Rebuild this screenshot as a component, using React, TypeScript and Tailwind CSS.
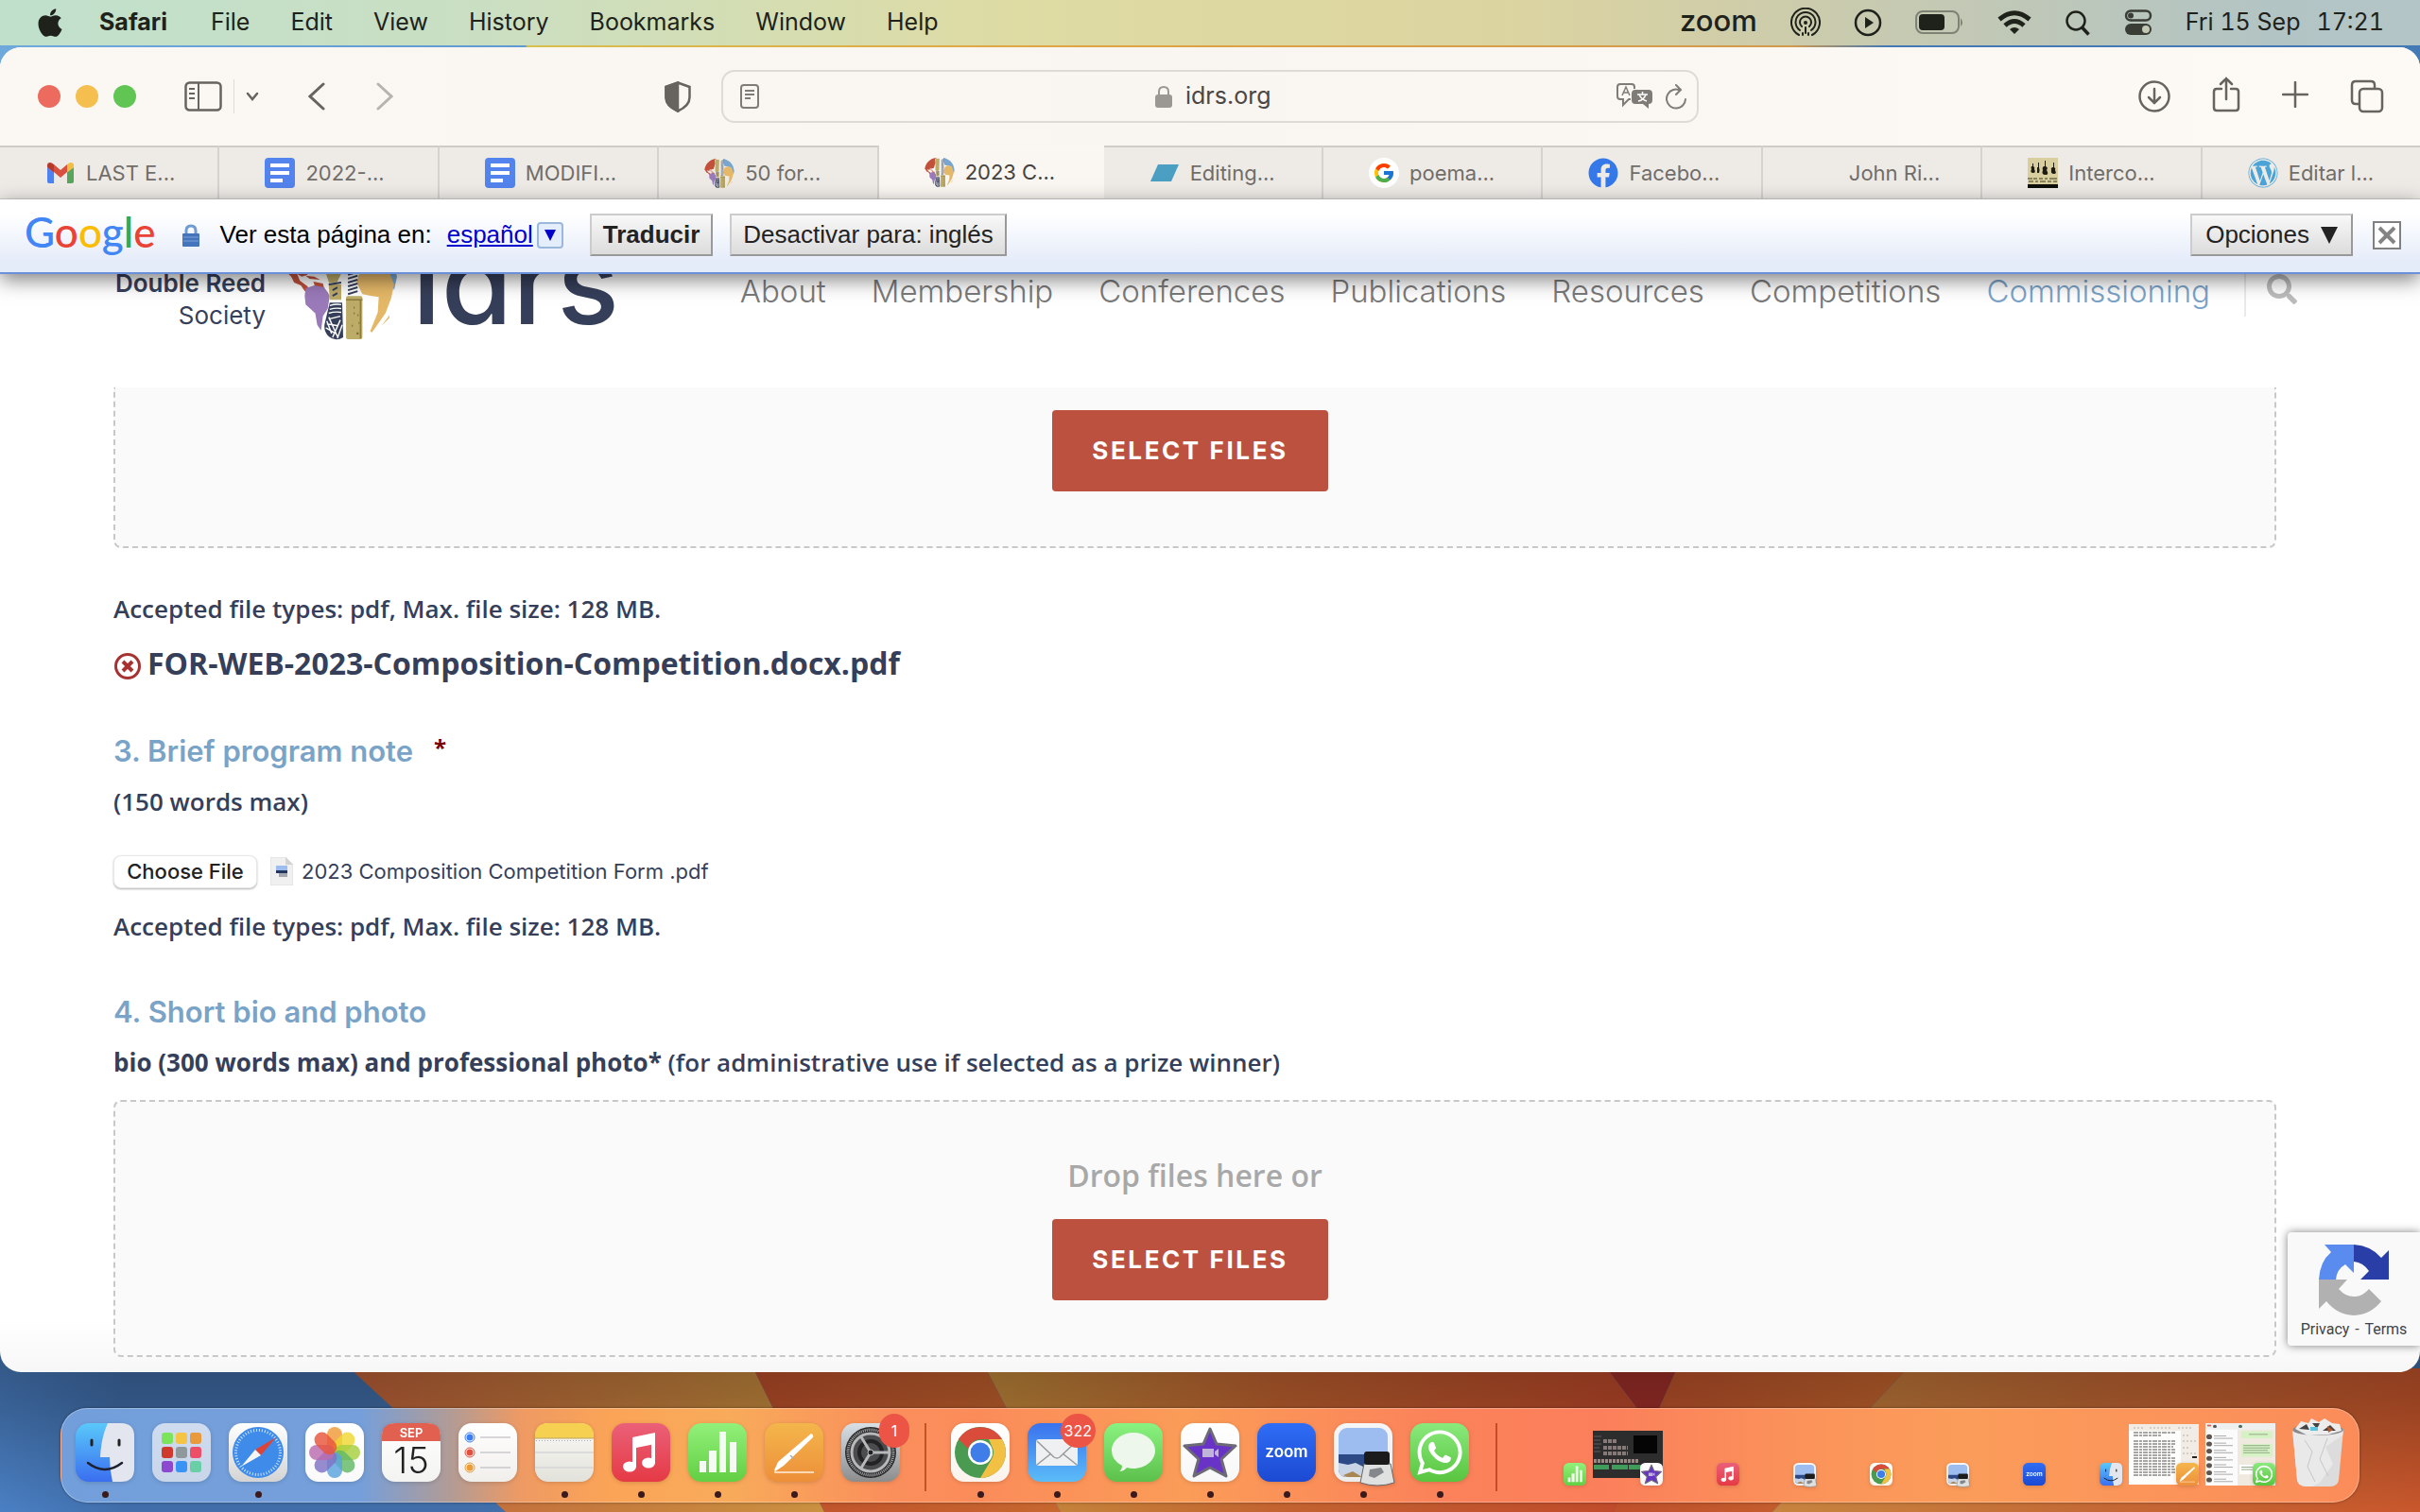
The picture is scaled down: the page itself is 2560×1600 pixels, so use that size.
import React from 'react';
import { FaApple, FaFacebook, FaWordpress, FaSearch, FaWhatsapp } from 'react-icons/fa';
import { FcGoogle } from 'react-icons/fc';

type IconProps = { className?: string };

/* ---------- logos shared by tabs and page header ---------- */

const IdrsGlobe = ({ className }: IconProps) => (
  <svg viewBox="0 0 116 116" className={className} aria-hidden="true">
    <path d="M1 46C4 24 20 8 44 3l4 16-8 10-4 14-10 2-6-1 2 4-6 2-5-3 3 7 8 6 2 6-5-1-4-6-7-3-3-6z" fill="#c2513b" />
    <path d="M28 55l10 2 1 4 1 0-1 1-9-1zM20 49l9 1 6 3-11-1z" fill="#c2513b" />
    <path d="M20 62l9-3 10 2 4 5 2 4-2 13-5 8-2 15-4-6-2-12-10-9-1-9z" fill="#9a7ab9" />
    <path d="M72 4c16 2 33 14 39 30l4 16-3 14-4-10-4-16-10-4-16-2-6-14z" fill="#7aa6cd" />
    <path d="M78 38l14-5 12 5 8 20-3 14-6 16-14 20-2-1 8-20 1-16-7-1-10-2-6-12z" fill="#e5b868" />
    <path d="M107 90l-8 11 8-8zM40 6l6 1v8l-5 3z" fill="#e5b868" />
    <path d="M42 6h16l-1 42-4 8-9 1-3-9z" fill="#bdab68" stroke="#fff" />
    <path d="M44 58h13v16H45z" fill="#bdab68" />
    <path d="M64 6h9v60h-9z" fill="#fff" />
    <path d="M64 12l10-3M64 16l10-3M64 20l10-3M64 24l10-3M64 28l10-3M64 32l10-3M64 36l10-3M64 40l10-3M64 44l10-3M64 48l10-3M64 52l10-3M64 56l10-3M64 60l10-3M64 64l10-3M64 68l10-3M44 58l13-2M48 70l5-3M48 64l5-3" stroke="#363f5a" strokeWidth="2" />
    <path d="M45 77h13l1 36q-8 5-15-1-6-6-4-14z" fill="#363f5a" />
    <path d="M45 80q6-2 12-1M45 84q6-2 12-1M44 88q6-2 13-1M44 94l12-3M42 99l12 2M41 103l10 6M44 92l9 20M56 95l-8 18M58 100l-5 14M42 96l5 13" stroke="#fff" strokeWidth="1.4" fill="none" />
    <rect x="62" y="70" width="17" height="45" rx="2" fill="#bdab68" />
    <path d="M62 74h17M77 74v40" stroke="#8c7b3c" strokeWidth="1.5" />
    <path d="M70 82h1M74 90h1M68 101h1M73 109h2M75 98h1M70 88h1" stroke="#7a6b35" strokeWidth="2" />
  </svg>
);

const Gmail = () => (
  <svg viewBox="0 0 32 32" className="size-8" aria-hidden="true">
    <path d="M2 10v15q0 2 2 2h5V15z" fill="#4f82ef" />
    <path d="M30 10v15q0 2-2 2h-5V15z" fill="#58a65c" />
    <path d="M9 7l7 6 7-6v8l-7 6-7-6z" fill="#d9503f" />
    <path d="M2 10V8q0-3 3-3 1.500 0 4 2v8.500L2 10z" fill="#b63a2c" />
    <path d="M30 10V8q0-3-3-3-1.500 0-4 2v8.500L30 10z" fill="#f1bd42" />
  </svg>
);

const Docs = () => (
  <svg viewBox="0 0 32 32" className="size-8" aria-hidden="true">
    <rect width="32" height="32" rx="4" fill="#5383ec" />
    <path d="M6 6h20v4H6zM6 14h20v4H6zM6 22h13v4H6z" fill="#fff" />
  </svg>
);

const Editing = () => (
  <svg viewBox="0 0 32 32" className="size-8" aria-hidden="true">
    <path d="M9 7h22l-8 18H1z" fill="#4b9fc2" />
  </svg>
);

const Orchestra = () => (
  <svg viewBox="0 0 32 32" className="size-8" aria-hidden="true">
    <path d="M0 0h32v32H0z" fill="#d9cf9e" />
    <path d="M0 28h32v4H0z" fill="#0c0f0a" />
    <path d="M4 9h1v-3h1v3q2 1 1 3 2 4-1 4-4 0-2-4-1-2 0-3zM10 10h1V5h1v5q1 2 0 6h-2zM17 9h1V3h1v6q3 1 1 4 3 5-1 5-5 0-3-5-1-3 1-4zM26 10h1V5h1v5q2 1 1 3 2 4-1 4-4 0-3-4-1-2 1-3z" fill="#1d1b14" />
    <path d="M0 22h5M6 22h4M12 22h4M18 22h3M23 22h8M1 25h5M8 25h3M13 25h6M21 25h4M27 25h4" stroke="#8a8460" strokeWidth="2" />
  </svg>
);

/* ---------- dock icons, all on a 62 grid ---------- */

const AppTile = ({ className = 'size-[62px]', children, id, from, to }: { className?: string; children?: React.ReactNode; id: string; from: string; to: string }) => (
  <svg viewBox="0 0 62 62" className={`block overflow-visible drop-shadow-sm ${className}`} aria-hidden="true">
    <defs>
      <linearGradient id={id} x1="0" y1="0" x2="0" y2="1">
        <stop offset="0" stopColor={from} />
        <stop offset="1" stopColor={to} />
      </linearGradient>
    </defs>
    <rect width="62" height="62" rx="14" fill={`url(#${id})`} />
    {children}
  </svg>
);

const Finder = ({ className }: IconProps) => (
  <AppTile className={className} id="finder" from="#5ac8fa" to="#3a6ef0">
    <path d="M34 0h14q14 0 14 14v34q0 14-14 14h-9q-3-13-3-26H26Q27 15 34 0z" fill="#e3e6ee" />
    <path d="M17 18v5M46 18v5" stroke="#222" strokeWidth="3" strokeLinecap="round" />
    <path d="M13 42q18 14 36 0" stroke="#1c2030" strokeWidth="2.500" fill="none" strokeLinecap="round" />
  </AppTile>
);

const launchColours = ['#7be45b', '#f6c445', '#e89a3c', '#cf3a2c', '#8f999c', '#ee4f68', '#8d48cf', '#3a94f5', '#69cfa6'];
const Launchpad = () => (
  <AppTile id="launchpad" from="#cfdcf0" to="#c9d6e9">
    {launchColours.map((c, i) => (
      <rect key={c} x={10 + (i % 3) * 15} y={10 + Math.floor(i / 3) * 15} width="12" height="12" rx="3" fill={c} />
    ))}
  </AppTile>
);

const SafariIcon = () => (
  <AppTile id="safari" from="#ffffff" to="#d4d4d4">
    <circle cx="31" cy="31" r="27" fill="#3e8bea" />
    <circle cx="31" cy="31" r="23.500" fill="none" stroke="#cfe4fb" strokeWidth="3" strokeDasharray="1 2" />
    <path d="M50 15L34 34l-6-6z" fill="#dd4436" />
    <path d="M13 46l15-18 6 6z" fill="#f5f5f5" />
  </AppTile>
);

const petals = ['#f09a38', '#efd832', '#a6cf3d', '#63b866', '#5aa3dd', '#7f72c4', '#bb6aae', '#e8563c'];
const Photos = () => (
  <AppTile id="photos" from="#ffffff" to="#fafafa">
    {petals.map((c, i) => (
      <rect key={c} x="23" y="4" width="16" height="27" rx="8" fill={c} opacity="0.82" transform={`rotate(${i * 45} 31 31)`} />
    ))}
  </AppTile>
);

const Calendar = () => (
  <AppTile id="calendar" from="#ffffff" to="#f3f3f1">
    <path d="M0 19v-5Q0 0 14 0h34q14 0 14 14v5z" fill="#e2604f" />
    <text x="31" y="15" textAnchor="middle" fontSize="13" fontWeight="600" fill="#fff" fontFamily="Inter, sans-serif">SEP</text>
    <text x="31" y="53" textAnchor="middle" fontSize="38" fontWeight="300" fill="#222" fontFamily="Inter, sans-serif">15</text>
  </AppTile>
);

const Reminders = () => (
  <AppTile id="reminders" from="#ffffff" to="#f1efec">
    {['#3b7df2', '#e2503f', '#ed9b35'].map((c, i) => (
      <g key={c}>
        <circle cx="12" cy={15 + i * 16} r="5" fill="none" stroke={c} strokeWidth="1" />
        <circle cx="12" cy={15 + i * 16} r="3.500" fill={c} />
        <path d={`M23 ${15 + i * 16}h32`} stroke="#b3b3b8" strokeWidth="1" />
      </g>
    ))}
  </AppTile>
);

const Notes = () => (
  <AppTile id="notes" from="#fbfaf7" to="#e2e2db">
    <path d="M0 16v-2Q0 0 14 0h34q14 0 14 14v2z" fill="#f6d050" />
    <path d="M0 16h62" stroke="#b9a667" />
    <path d="M1 18.500h60" stroke="#aaa" strokeDasharray="1 2" />
    <path d="M0 31h62M0 47h62" stroke="#d5d5d6" strokeWidth="1.500" />
  </AppTile>
);

const Music = ({ className }: IconProps) => (
  <AppTile className={className} id="music" from="#ea6078" to="#e53a45">
    <path d="M22 15l24-5v12l-20 4v20h-4z" fill="#fff" />
    <path d="M42 18h4v24h-4z" fill="#fff" />
    <ellipse cx="19" cy="46" rx="7" ry="5.500" fill="#fff" />
    <ellipse cx="39" cy="42" rx="7" ry="5.500" fill="#fff" />
  </AppTile>
);

const Numbers = ({ className }: IconProps) => (
  <AppTile className={className} id="numbers" from="#92f07a" to="#62cf43">
    <path d="M12 40h7v12h-7zM22 29h8v23h-8zM33 9h7v43h-7zM44 20h7v32h-7z" fill="#f4fbf2" />
  </AppTile>
);

const Pages = ({ className }: IconProps) => (
  <AppTile className={className} id="pages" from="#f4b64b" to="#ed8f3a">
    <path d="M49 11q3 1 2 4L20 45l-9 6-1-1 4-9z" fill="#fff" />
    <path d="M27 34l4 4" stroke="#aaa" strokeWidth="1.500" />
    <path d="M10 52h42" stroke="#fbd9b4" strokeWidth="2" />
  </AppTile>
);

const Settings = () => (
  <AppTile id="settings" from="#d8e0e6" to="#8c8c8c">
    <circle cx="31" cy="31" r="27" fill="#2b2b2c" />
    <circle cx="31" cy="31" r="24" fill="none" stroke="#a5a7aa" strokeWidth="3" strokeDasharray="1 1" />
    <circle cx="31" cy="31" r="20" fill="#4b4c4e" stroke="#b6b8ba" strokeWidth="3" />
    <circle cx="31" cy="31" r="12" fill="none" stroke="#232324" strokeWidth="4" />
    <path d="M31 31h21M31 31L20 13M31 31L20 49" stroke="#b6b8ba" strokeWidth="3" />
    <circle cx="31" cy="31" r="3" fill="#222" stroke="#bbb" />
  </AppTile>
);

const Chrome = ({ className }: IconProps) => (
  <AppTile className={className} id="chrome" from="#ffffff" to="#fbf3ec">
    <circle cx="31" cy="31" r="27" fill="#4a9a52" />
    <path d="M8 17A27 27 0 0 1 54 17H31a14 14 0 0 0-13 10z" fill="#d94b3b" />
    <path d="M54 17A27 27 0 0 1 31 58l12-20a14 14 0 0 0 0-14l-3-7z" fill="#f2c043" />
    <circle cx="31" cy="31" r="13" fill="#fff" />
    <circle cx="31" cy="31" r="10.500" fill="#3f7de8" />
  </AppTile>
);

const Mail = () => (
  <AppTile id="mail" from="#3a72ee" to="#5bbcf8">
    <rect x="9" y="17" width="44" height="28" rx="3" fill="#eef0f1" />
    <path d="M10 19l18 17q3 2 6 0l18-17M10 44l15-12M52 44L37 32" stroke="#97999c" strokeWidth="1.500" fill="none" />
  </AppTile>
);

const Messages = () => (
  <AppTile id="messages" from="#8af280" to="#5cc14b">
    <path d="M31 10c13 0 23 9 23 19s-10 19-23 19q-4 0-7-1-3 4-8 4 3-2 3-6Q8 39 8 29C8 19 18 10 31 10z" fill="#eef7ec" />
  </AppTile>
);

const IMovie = ({ className }: IconProps) => (
  <AppTile className={className} id="imovie" from="#ffffff" to="#f7f7f8">
    <path d="M31 6l7 16 20 2-15 14 5 18-17-9-17 9 5-18L4 24l20-2z" fill="#6a33c8" stroke="#6b6a76" strokeWidth="3" strokeLinejoin="round" />
    <path d="M23 27h12v9H23zM36 30l4-3v9l-4-3z" fill="#c0b5d8" />
  </AppTile>
);

const Zoom = ({ className }: IconProps) => (
  <AppTile className={className} id="zoom" from="#2f6df6" to="#1c49d2">
    <text x="31" y="36" textAnchor="middle" fontSize="17" fontWeight="600" fill="#fff" fontFamily="Inter, sans-serif">zoom</text>
  </AppTile>
);

const Preview = ({ className }: IconProps) => (
  <AppTile className={className} id="preview" from="#f6f6f7" to="#ececec">
    <rect x="5" y="5" width="52" height="52" rx="9" fill="#9dbcf0" />
    <path d="M5 33h52v15q0 9-9 9H14q-9 0-9-9z" fill="#2e4a86" />
    <path d="M5 42l10 2 8-2 12 6v9H14q-9 0-9-8z" fill="#c9d5e6" />
    <path d="M10 55l10-4 10 6H14z" fill="#a98755" />
    <path d="M32 43h28l4 20q-18 6-36 0z" fill="#dfe0e0" stroke="#666" />
    <path d="M38 49l12-2 3 5-10 6-6-2z" fill="#84888c" />
    <rect x="32" y="30" width="27" height="14" rx="3" fill="#1b1b1c" />
  </AppTile>
);

const WhatsApp = ({ className }: IconProps) => (
  <AppTile className={className} id="whatsapp" from="#8ae97c" to="#58c53f">
    <FaWhatsapp size={54} x="4" y="4" color="#fff" />
  </AppTile>
);

const Trash = () => (
  <svg viewBox="0 0 56 74" className="h-[74px] w-14" aria-hidden="true">
    <path d="M1 12h54l-5 54q-1 7-9 7H16q-9 0-10-7z" fill="#dcdcdd" />
    <path d="M1 12h54l-1 7-18 12 8 18-14 20-8 4h-6q-9 0-10-7z" fill="#e9e9ea" />
    <path d="M14 24l8 12-5 16 8 16M38 22l-8 22 9 18" stroke="#c6c6c8" fill="none" />
    <ellipse cx="28" cy="13" rx="27" ry="6" fill="#8b8b8d" />
    <path d="M4 12l6-8 8 2 3-5 8 4 6-4 8 5 8 1 2 7-14 4-22 1z" fill="#ececec" />
    <path d="M8 12l8-5 3 6zM22 6l5 6 3-6zM33 14l8-6 6 6z" fill="#444" />
    <path d="M20 10h8v4h-8z" fill="#5cc3dd" />
    <path d="M38 9l6 4-5 3z" fill="#b5572f" />
  </svg>
);

const MovieWindow = () => (
  <svg viewBox="0 0 74 50" className="h-[50px] w-[74px]" aria-hidden="true">
    <path d="M0 0h74v50H0z" fill="#2d2d2e" />
    <path d="M43 5h25v19H43z" fill="#050505" />
    <path d="M1 36h16v5H1zM20 36h17v5H20zM38 36h13v5H38z" fill="#3f9c5b" />
    <path d="M1 32h47" stroke="#968a86" strokeWidth="4" strokeDasharray="3 1" />
    <path d="M11 11h14M11 18h26M11 24h26" stroke="#857a77" strokeWidth="4" strokeDasharray="4 1" />
    <path d="M1 6h8M1 10h7M1 14h8M1 18h6M1 22h7" stroke="#5c5c5d" />
  </svg>
);

const PagesWindow = () => (
  <svg viewBox="0 0 74 64" className="h-16 w-[74px]" aria-hidden="true">
    <path d="M0 0h74v64H0z" fill="#fdfdfc" />
    <path d="M0 0h74v7H0zM55 7h19v57H55z" fill="#f1ece6" />
    <path d="M5 9h44M5 12h30M5 18h44M5 21h44M5 24h42M5 27h44M5 30h44M5 33h40M5 36h44M5 39h44M5 42h44M5 45h43M5 48h44M5 51h44M5 54h40" stroke="#8b8988" strokeWidth="1.500" strokeDasharray="5 1 3 1" />
    <path d="M5 4h12M22 4h24M52 4h16M57 12h8M57 18h14M57 25h8M57 31h14" stroke="#b8aea4" strokeDasharray="2 2" />
    <path d="M67 35h5" stroke="#222" strokeWidth="2" />
  </svg>
);

const ChatWindow = () => (
  <svg viewBox="0 0 74 78" className="h-[66px] w-[74px]" preserveAspectRatio="none" aria-hidden="true">
    <path d="M0 0h74v78H0z" fill="#fbfbfb" />
    <path d="M34 7h40v71H34z" fill="#efe9df" />
    <path d="M0 0h74v8H0z" fill="#eef0f0" />
    <path d="M38 10h33v9H38zM38 26h33v16H38z" fill="#d5f2c4" />
    <path d="M36 52h30v12H36z" fill="#fff" />
    {[18, 27, 36, 45, 54, 63, 72].map((y) => (
      <g key={y}>
        <circle cx="4" cy={y - 1} r="3" fill="#5d5550" />
        <path d={`M9 ${y - 2}h13M9 ${y + 1}h20`} stroke="#a4a4a4" />
      </g>
    ))}
    <path d="M40 28h28M40 31h28M40 34h26M40 37h28M46 14h20M38 55h24M38 58h20" stroke="#8da381" />
    <circle cx="10" cy="4" r="2" fill="#555" />
    <circle cx="37" cy="4" r="2" fill="#486b5a" />
    <path d="M2 3h4" stroke="#e25b4b" strokeWidth="2" />
  </svg>
);

/* ---------- wallpaper ---------- */

const Wallpaper = () => (
  <svg viewBox="0 0 2560 1600" preserveAspectRatio="none" className="absolute inset-0 h-full w-full" aria-hidden="true">
    <defs>
      <linearGradient id="wpTop">
        <stop offset="0" stopColor="#6fa9dc" />
        <stop offset="0.217" stopColor="#5f9ad2" />
        <stop offset="0.218" stopColor="#d8bf4e" />
        <stop offset="0.45" stopColor="#e0a344" />
        <stop offset="0.74" stopColor="#d29a4d" />
        <stop offset="0.78" stopColor="#4379b5" />
        <stop offset="1" stopColor="#4379b5" />
      </linearGradient>
      <linearGradient id="wpBlue">
        <stop offset="0" stopColor="#4a80c4" />
        <stop offset="0.05" stopColor="#416fab" />
        <stop offset="1" stopColor="#4271a8" />
      </linearGradient>
      <linearGradient id="wpA">
        <stop offset="0" stopColor="#c2633a" />
        <stop offset="1" stopColor="#cb9240" />
      </linearGradient>
      <linearGradient id="wpB">
        <stop offset="0" stopColor="#c0502b" />
        <stop offset="1" stopColor="#c8682f" />
      </linearGradient>
      <linearGradient id="wpC">
        <stop offset="0" stopColor="#c68d3d" />
        <stop offset="0.4" stopColor="#c46430" />
        <stop offset="1" stopColor="#c0442a" />
      </linearGradient>
      <linearGradient id="wpD">
        <stop offset="0" stopColor="#c8853f" />
        <stop offset="0.5" stopColor="#c56a35" />
        <stop offset="1" stopColor="#c9572c" />
      </linearGradient>
      <linearGradient id="wpShade" x1="0" y1="0" x2="0" y2="1">
        <stop offset="0" stopColor="#000" stopOpacity="0.32" />
        <stop offset="0.3" stopColor="#000" stopOpacity="0.25" />
        <stop offset="1" stopColor="#000" stopOpacity="0" />
      </linearGradient>
    </defs>
    <path d="M0 0h2560v800H0z" fill="url(#wpTop)" />
    <path d="M0 800h2560v800H0z" fill="url(#wpBlue)" />
    <path d="M370 1448L535 1600H872L797 1448z" fill="url(#wpA)" />
    <path d="M797 1448L872 1600H1122L1043 1448z" fill="url(#wpB)" />
    <path d="M1043 1448L1122 1600H1815L1700 1448z" fill="url(#wpC)" />
    <path d="M1700 1448L1815 1600H1706L1774 1448z" fill="#a3302a" />
    <path d="M1774 1448L1706 1600H1875L2018 1448z" fill="url(#wpB)" />
    <path d="M2018 1448L1875 1600H2560V1448z" fill="url(#wpD)" />
    <path d="M0 1430h2560v170H0z" fill="url(#wpShade)" />
  </svg>
);

/* ---------- menu bar ---------- */

const menus = ['File', 'Edit', 'View', 'History', 'Bookmarks', 'Window', 'Help'];

const MenuBar = () => (
  <header className="relative flex h-12 shrink-0 items-center justify-between bg-linear-[90deg,#c0e0cc_0%,#cadfc2_20%,#dedba3_42%,#dcd4a0_62%,#cfcda9_72%,#bec7b8_84%,#b2c4c4_94%,#b4c5c7_100%] pr-[38px] pl-9 text-[25px] text-[#1e221b]">
    <nav className="flex items-center gap-[43px]">
      <button aria-label="Apple menu" className="-mr-2"><FaApple className="size-[34px]" /></button>
      <button className="mr-[3px] font-bold">Safari</button>
      {menus.map((m) => <button key={m}>{m}</button>)}
    </nav>
    <div className="flex items-center gap-[35px]">
      <span className="pb-1 text-[31px] leading-8 font-medium">zoom</span>
      <svg viewBox="0 0 32 32" className="size-8" fill="none" stroke="currentColor" strokeWidth="2" strokeLinecap="round">
        <path d="M9 29a15 15 0 1 1 14 0M10 24a10.500 10.500 0 1 1 12 0M12 20a6 6 0 1 1 8 0" />
        <circle cx="16" cy="16" r="2" fill="currentColor" stroke="none" />
        <path d="M16 21v6M13 27v2M19 27v2" />
      </svg>
      <svg viewBox="0 0 30 30" className="size-[30px]" fill="none" stroke="currentColor" strokeWidth="2.500">
        <circle cx="15" cy="15" r="13" />
        <path d="M12 9v12l9-6z" fill="currentColor" stroke="none" />
      </svg>
      <svg viewBox="0 0 52 26" className="h-[26px] w-[52px]" fill="none">
        <rect x="1" y="1" width="45" height="23" rx="7" stroke="#7d8373" strokeWidth="2" />
        <rect x="4" y="4" width="27" height="17" rx="4" fill="#1e221b" />
        <path d="M48 8q4 5 0 9z" fill="#7d8373" />
      </svg>
      <svg viewBox="0 0 36 26" className="h-[26px] w-9" fill="none" stroke="currentColor" strokeWidth="5">
        <path d="M2 9.500Q18-4 34 9.500M8 16q10-9 20 0" />
        <path d="M18 25l-5-5q5-4 10 0z" fill="currentColor" stroke="none" />
      </svg>
      <svg viewBox="0 0 28 28" className="size-7" fill="none" stroke="currentColor" strokeWidth="2.500">
        <circle cx="12" cy="12" r="9.500" />
        <path d="M18.500 19l7 7.500" strokeWidth="3.500" />
      </svg>
      <svg viewBox="0 0 30 28" className="h-7 w-[30px]" fill="none">
        <rect x="2" y="1.500" width="26" height="10" rx="5" stroke="#3a3d35" strokeWidth="2.500" />
        <circle cx="7" cy="6.500" r="3" fill="#3a3d35" />
        <rect x="1" y="15" width="28" height="12" rx="6" fill="#3a3d35" />
        <circle cx="23" cy="21" r="4" fill="#c3c8b5" />
      </svg>
      <span className="flex gap-[17px] tabular-nums"><span>Fri 15 Sep</span><span>17:21</span></span>
    </div>
  </header>
);

/* ---------- Safari chrome ---------- */

const Toolbar = () => (
  <div className="grid h-[104px] shrink-0 grid-cols-[1fr_1034px_1fr] items-center bg-linear-to-r from-[#fbf8f4] via-[#f9f5f1] to-[#fdf9f4] text-[#67635e]">
    <div className="flex items-center pr-8 pl-10">
      <button aria-label="Close" className="size-6 rounded-full bg-[#ec6a5e]" />
      <button aria-label="Minimise" className="ml-4 size-6 rounded-full bg-[#f4bf4f]" />
      <button aria-label="Full screen" className="ml-4 size-6 rounded-full bg-[#61c554]" />
      <button aria-label="Sidebar" className="ml-[51px]">
        <svg viewBox="0 0 40 32" className="h-8 w-10" fill="none" stroke="currentColor" strokeWidth="2.500">
          <rect x="1.500" y="1.500" width="37" height="29" rx="4" />
          <path d="M15 2v28M5 8h6M5 13h6M5 18h6" strokeWidth="2" />
        </svg>
      </button>
      <span className="ml-3 h-9 w-px bg-[#dedad5]" />
      <button aria-label="Tab groups" className="ml-3">
        <svg viewBox="0 0 14 12" className="h-3 w-[14px]" fill="none" stroke="currentColor" strokeWidth="2.500" strokeLinecap="round"><path d="M2 3l5 6 5-6" /></svg>
      </button>
      <button aria-label="Back" className="ml-[52px]">
        <svg viewBox="0 0 18 30" className="h-[30px] w-[18px]" fill="none" stroke="currentColor" strokeWidth="3" strokeLinecap="round"><path d="M16 2L2 15l14 13" /></svg>
      </button>
      <button aria-label="Forward" className="ml-[54px] text-[#b7b3af]">
        <svg viewBox="0 0 18 30" className="h-[30px] w-[18px]" fill="none" stroke="currentColor" strokeWidth="3" strokeLinecap="round"><path d="M2 2l14 13L2 28" /></svg>
      </button>
      <button aria-label="Privacy report" className="ml-auto">
        <svg viewBox="0 0 28 33" className="h-[33px] w-7" fill="none" stroke="currentColor" strokeWidth="2.500">
          <path d="M14 1.500L26.500 6v11q0 9-12.500 14.500Q1.500 26 1.500 17V6z" />
          <path d="M14 1.500L1.500 6v11q0 9 12.500 14.500z" fill="currentColor" />
        </svg>
      </button>
    </div>
    <div className="flex h-14 items-center justify-between rounded-[14px] border-2 border-[#dedad6] pr-2.5 pl-[18px]">
      <button aria-label="Reader" className="mr-[68px]">
        <svg viewBox="0 0 20 26" className="h-[26px] w-5" fill="none" stroke="#7f7c78" strokeWidth="2">
          <rect x="1" y="1" width="18" height="24" rx="3" />
          <path d="M5 7h10M5 11h10M5 15h6" />
        </svg>
      </button>
      <div className="flex items-center gap-[14px]">
        <svg viewBox="0 0 18 24" className="h-6 w-[18px]" aria-hidden="true">
          <path d="M4 11V7q0-5 5-5t5 5v4" fill="none" stroke="#9b9894" strokeWidth="2" />
          <rect y="10" width="18" height="14" rx="3" fill="#9b9894" />
        </svg>
        <input aria-label="Address" defaultValue="idrs.org" className="w-[104px] bg-transparent text-[25px] text-[#4a4744] outline-none" />
      </div>
      <div className="flex items-center gap-3">
        <button aria-label="Translate">
          <svg viewBox="0 0 40 28" className="h-7 w-10" fill="none">
            <path d="M16 17h-2l-6 6v-6H5q-3 0-3-3V4q0-3 3-3h12q3 0 3 3v2" stroke="#7f7c78" strokeWidth="2" />
            <path d="M7 13l4-9 4 9M8.500 10h5" stroke="#7f7c78" strokeWidth="1.500" />
            <path d="M21 7h14q4 0 4 4v7q0 4-4 4v5l-6-5h-8q-4 0-4-4v-7q0-4 4-4z" fill="#7f7c78" />
            <path d="M23 12h11M28.500 9v3M32 12q-2 6-8 7M25 12q2 5 8 7" stroke="#fff" strokeWidth="1.500" />
          </svg>
        </button>
        <button aria-label="Reload">
          <svg viewBox="0 0 24 27" className="h-[27px] w-6" fill="none" stroke="#7f7c78" strokeWidth="2" strokeLinecap="round">
            <path d="M15 6Q12 5 9 6a10 10 0 1 0 13 10M12 1l5 5-5 5" />
          </svg>
        </button>
      </div>
    </div>
    <div className="flex items-center justify-end gap-11 pr-[38px]">
      <button aria-label="Downloads">
        <svg viewBox="0 0 34 34" className="size-[34px]" fill="none" stroke="currentColor" strokeWidth="2.500" strokeLinecap="round"><circle cx="17" cy="17" r="15.500" /><path d="M17 9v15M11 18l6 6 6-6" /></svg>
      </button>
      <button aria-label="Share" className="pb-1">
        <svg viewBox="0 0 30 38" className="h-[38px] w-[30px]" fill="none" stroke="currentColor" strokeWidth="2.500" strokeLinecap="round"><path d="M10 13H5q-3 0-3 3v17q0 3 3 3h20q3 0 3-3V16q0-3-3-3h-5M15 24V2M9 8l6-6 6 6" /></svg>
      </button>
      <button aria-label="New tab" className="pb-1">
        <svg viewBox="0 0 28 28" className="size-7" fill="none" stroke="currentColor" strokeWidth="2.500" strokeLinecap="round"><path d="M14 1v26M1 14h26" /></svg>
      </button>
      <button aria-label="Tab overview">
        <svg viewBox="0 0 36 36" className="size-9" fill="none" stroke="currentColor" strokeWidth="2.500"><rect x="10" y="10" width="24" height="24" rx="4" /><path d="M10 26H6q-4 0-4-4V6q0-4 4-4h16q4 0 4 4v4" /></svg>
      </button>
    </div>
  </div>
);

const tabs = [
  { title: 'LAST E...', icon: <Gmail /> },
  { title: '2022-...', icon: <Docs /> },
  { title: 'MODIFI...', icon: <Docs /> },
  { title: '50 for...', icon: <IdrsGlobe className="size-8" /> },
  { title: '2023 C...', icon: <IdrsGlobe className="size-8" />, active: true },
  { title: 'Editing...', icon: <Editing /> },
  { title: 'poema...', icon: <FcGoogle className="size-8 rounded-full bg-white p-1" /> },
  { title: 'Facebo...', icon: <FaFacebook className="size-8 text-[#3478ea]" /> },
  { title: 'John Ri...', icon: <span className="size-8" /> },
  { title: 'Interco...', icon: <Orchestra /> },
  { title: 'Editar l...', icon: <FaWordpress className="size-8 text-[#4ba4d8]" /> },
];

const TabBar = () => (
  <div role="tablist" className="flex h-[57px] shrink-0 border-b border-[#d3d0cc] text-[22px]">
    {tabs.map((t) => (
      <button
        key={t.title}
        role="tab"
        aria-selected={!!t.active}
        className={
          t.active
            ? 'flex w-[238px] items-center gap-[11px] bg-[#faf6f2] pl-12 text-[#45423f]'
            : 'flex flex-1 items-center gap-[11px] border-t-2 border-r-2 border-t-[#cfccc8] border-r-[#d6d3cf] bg-[#eeebe7] pl-12 text-[#716d69] last:border-r-0'
        }
      >
        {t.icon}
        <span className="whitespace-nowrap">{t.title}</span>
      </button>
    ))}
  </div>
);

/* ---------- Google translate bar ---------- */

const barButton = 'h-[45px] border-2 border-t-[#ccc] border-r-[#999] border-b-[#999] border-l-[#ccc] bg-linear-to-b from-[#f8f8f8] to-[#dcdcdc] text-[#222]';

const TranslateBar = () => (
  <div className="relative z-10 flex h-[79px] shrink-0 items-center border-b-2 border-[#6b90da] bg-linear-to-b from-white from-20% to-[#e5ecf9] to-85% pr-5 pb-0.5 pl-[26px] font-['Liberation_Sans',Arial,sans-serif] text-[26px] text-black shadow-[0_6px_20px_rgba(0,0,0,0.5)]">
    <span className="pb-2 font-['Lato',sans-serif] text-[44px] leading-[60px] font-medium">
      <span className="text-[#4285f4]">G</span><span className="text-[#ea4335]">o</span><span className="text-[#fbbc05]">o</span><span className="text-[#4285f4]">g</span><span className="text-[#34a853]">l</span><span className="text-[#ea4335]">e</span>
    </span>
    <svg viewBox="0 0 18 24" className="ml-7 h-6 w-[18px]" aria-hidden="true">
      <path d="M4 11V7q0-5 5-5t5 5v4" fill="none" stroke="#6f9bd1" strokeWidth="3" />
      <rect y="10" width="18" height="14" rx="1" fill="#4474bb" />
      <path d="M1 14h16M1 18h16" stroke="#7ba3d8" />
    </svg>
    <span className="ml-[22px]">Ver esta página en:</span>
    <a href="#es" className="ml-4 flex items-center gap-1 text-[#0000cc]">
      <span className="underline">español</span>
      <span className="flex h-7 w-7 items-center justify-center rounded-sm border-2 border-[#9ab8dc] bg-[#e4eefb]">
        <svg viewBox="0 0 12 12" className="size-3"><path d="M0 0h12L6 12z" fill="#0000cc" /></svg>
      </span>
    </a>
    <button className={`${barButton} ml-7 px-3 font-bold`}>Traducir</button>
    <button className={`${barButton} ml-[18px] px-3`}>Desactivar para: inglés</button>
    <button className={`${barButton} ml-auto flex items-center gap-3 px-3.5`}>
      Opciones
      <svg viewBox="0 0 18 18" className="size-[18px]"><path d="M0 0h18L9 18z" fill="#222" /></svg>
    </button>
    <button aria-label="Cerrar" className="ml-[21px] size-[30px] border-2 border-[#808080] bg-white">
      <svg viewBox="0 0 26 26" className="size-full" stroke="#848484" strokeWidth="4"><path d="M5 5l16 16M21 5L5 21" /></svg>
    </button>
  </div>
);

/* ---------- page ---------- */

const links = ['About', 'Membership', 'Conferences', 'Publications', 'Resources', 'Competitions', 'Commissioning'];

const SiteHeader = () => (
  <div className="flex h-[120px] shrink-0 items-end justify-between overflow-hidden bg-white pr-[130px] pb-[50px] pl-[120px]">
    <div className="flex items-end text-[#363f5a]">
      <div className="w-[161px] pb-[9px] text-right text-[26px] leading-[34px] whitespace-nowrap">
        <div className="font-semibold">Double Reed</div>
        <div>Society</div>
      </div>
      <IdrsGlobe className="ml-[22px] size-[118px]" />
      <span className="ml-[15px] text-[122px] leading-none font-medium">idrs</span>
    </div>
    <nav className="mb-[25px] flex items-start gap-12 text-[33px] leading-[38px] font-light text-[#7a7a7a]">
      {links.map((l) => (
        <a key={l} href={`#${l}`} className={l === 'Commissioning' ? 'text-[#7aa3c8]' : ''}>{l}</a>
      ))}
      <button aria-label="Search" className="-ml-[12px] h-[46px] border-l-2 border-[#eaeaea] pb-3 pl-[22px]">
        <FaSearch className="size-8 text-[#bcbcbc]" />
      </button>
    </nav>
  </div>
);

const SelectFiles = () => (
  <button className="mr-[10px] h-[86px] w-[292px] rounded bg-[#bc5140] text-[26px] font-bold tracking-widest text-white">SELECT FILES</button>
);

const UploadForm = () => (
  <main className="mr-[152px] ml-[120px] flex flex-col font-['Open_Sans',sans-serif] text-[26px] leading-10 font-semibold text-[#363f5a]">
    <div className="flex h-[170px] justify-center rounded-b-lg border-2 border-t-0 border-dashed border-[#c8c8c8] bg-[#fafafa] pt-6 font-['Inter',sans-serif]">
      <SelectFiles />
    </div>
    <p className="mt-11">Accepted file types: pdf, Max. file size: 128 MB.</p>
    <div className="mt-[18px] flex items-center gap-1.5">
      <button aria-label="Remove file" className="pt-1.5">
        <svg viewBox="0 0 30 30" className="size-[30px]" fill="none" stroke="#a63232">
          <circle cx="15" cy="15" r="12.500" strokeWidth="3" />
          <path d="M10 10l10 10M20 10L10 20" strokeWidth="4" />
        </svg>
      </button>
      <strong className="text-[32px] font-bold">FOR-WEB-2023-Composition-Competition.docx.pdf</strong>
    </div>
    <h3 className="mt-[53px] font-['Inter',sans-serif] text-[31px] text-[#7aa3c8]">
      3. Brief program note <span className="ml-3.5 align-top font-['Open_Sans',sans-serif] text-2xl leading-8 font-bold text-[#790000]">*</span>
    </h3>
    <p className="mt-[13px]">(150 words max)</p>
    <div className="mt-9 flex h-9 items-center font-['Inter',sans-serif] text-[22px] font-normal">
      <button className="h-[35px] w-[152px] rounded-lg border border-[#e8e8e8] bg-white leading-8 font-medium text-[#222] shadow-[0_1px_2px_rgba(0,0,0,0.3)]">Choose File</button>
      <svg viewBox="0 0 24 30" className="ml-[14px] h-[30px] w-6" aria-hidden="true">
        <path d="M0 0h16l8 8v22H0z" fill="#f0f0f1" stroke="#dcdcdd" />
        <path d="M16 0l8 8h-8z" fill="#d3d3d5" />
        <path d="M6 9h12v6H6z" fill="#9dbcf0" />
        <path d="M6 14h12v3H6z" fill="#23365f" />
        <path d="M9 17h9v4H9z" fill="#a4a8ad" />
      </svg>
      <span className="ml-[9px]">2023 Composition Competition Form .pdf</span>
    </div>
    <p className="mt-5">Accepted file types: pdf, Max. file size: 128 MB.</p>
    <h3 className="mt-[51px] font-['Inter',sans-serif] text-[31px] text-[#7aa3c8]">4. Short bio and photo</h3>
    <p className="mt-[13px]"><strong className="font-bold">bio (300 words max) and professional photo*</strong> (for administrative use if selected as a prize winner)</p>
    <div className="mt-5 flex h-[272px] flex-col items-center rounded-lg border-2 border-dashed border-[#c8c8c8] bg-[#fafafa] pt-[58px]">
      <span className="text-[32px] text-[#a8a8a8]">Drop files here or</span>
      <div className="mt-[26px] flex font-['Inter',sans-serif]"><SelectFiles /></div>
    </div>
  </main>
);

const Recaptcha = () => (
  <div className="absolute right-0 bottom-7 flex h-[120px] w-[140px] flex-col items-center rounded-l bg-[#f9f9f9] pt-[13px] shadow-[0_0_10px_rgba(0,0,0,0.5)]">
    <svg viewBox="0 0 74 75" className="h-[75px] w-[74px]" aria-hidden="true">
      <path d="M37 0q18 1 29 14l8-8v31H44l9-9q-6-9-16-10z" fill="#2a3ea8" />
      <path d="M37 0v30l-9-9q-9 5-10 16H0Q1 18 13 8L6 0z" fill="#5a8bee" />
      <path d="M0 37h30l-9 10q8 9 18 8 8-1 14-8l13 13Q55 74 37 75 19 74 8 60L0 68z" fill="#b1b1b1" />
    </svg>
    <p className="font-['Roboto',sans-serif] text-base leading-[30px] text-[#444]">
      <a href="#privacy">Privacy</a> <span className="px-0.5">-</span> <a href="#terms">Terms</a>
    </p>
  </div>
);

/* ---------- dock ---------- */

const DockApp = ({ children, running, badge }: { children: React.ReactNode; running?: boolean; badge?: string }) => (
  <button className="relative flex flex-col items-center">
    {children}
    <span className={`mt-2.5 size-[7px] rounded-full ${running ? 'bg-[#3a1a1c]' : ''}`} />
    {badge && (
      <span className="absolute -top-2.5 -right-2.5 flex h-9 min-w-8 items-center justify-center rounded-full bg-[#ec5545] px-1 text-base text-white">{badge}</span>
    )}
  </button>
);

const Minimised = ({ children, preview }: { children: React.ReactNode; preview?: React.ReactNode }) => (
  <button className="relative flex h-[66px] w-[74px] items-center justify-center">
    {preview}
    <span className="absolute right-0 bottom-0">{children}</span>
  </button>
);

const Dock = () => (
  <footer className="relative flex h-[148px] shrink-0 flex-col justify-end px-16 pb-[10px]">
    <div className="flex h-[100px] items-start rounded-[28px] border border-white/30 bg-linear-[90deg,#729fdb_0%,#759fda_13%,#b39b94_17%,#ee9a63_20%,#fba457_24%,#f8ab5a_29%,#fa8f5c_36%,#fb8c5a_40%,#fb9c58_49%,#fb825a_60%,#fb7f5b_67%,#fb955a_77%,#fb9c5a_83%,#fb8c5a_100%] px-[15px] pt-[15px] shadow-[0_0_3px_rgba(0,0,0,0.4)]">
      <div className="flex gap-[19px]">
        <DockApp running><Finder /></DockApp>
        <DockApp><Launchpad /></DockApp>
        <DockApp running><SafariIcon /></DockApp>
        <DockApp><Photos /></DockApp>
        <DockApp><Calendar /></DockApp>
        <DockApp><Reminders /></DockApp>
        <DockApp running><Notes /></DockApp>
        <DockApp running><Music /></DockApp>
        <DockApp running><Numbers /></DockApp>
        <DockApp running><Pages /></DockApp>
        <DockApp badge="1"><Settings /></DockApp>
      </div>
      <span className="mx-[26px] h-[72px] w-0.5 bg-[#c25526]" />
      <div className="flex gap-[19px]">
        <DockApp running><Chrome /></DockApp>
        <DockApp running badge="322"><Mail /></DockApp>
        <DockApp running><Messages /></DockApp>
        <DockApp running><IMovie /></DockApp>
        <DockApp running><Zoom /></DockApp>
        <DockApp running><Preview /></DockApp>
        <DockApp running><WhatsApp /></DockApp>
      </div>
      <span className="mr-5 ml-7 h-[72px] w-0.5 bg-[#c84a28]" />
      <div className="flex gap-[7px]">
        <Minimised><Numbers className="size-6" /></Minimised>
        <Minimised preview={<MovieWindow />}><IMovie className="size-6" /></Minimised>
        <Minimised><Music className="size-6" /></Minimised>
        <Minimised><Preview className="size-6" /></Minimised>
        <Minimised><Chrome className="size-6" /></Minimised>
        <Minimised><Preview className="size-6" /></Minimised>
        <Minimised><Zoom className="size-6" /></Minimised>
        <Minimised><Finder className="size-6" /></Minimised>
        <Minimised preview={<PagesWindow />}><Pages className="size-6" /></Minimised>
        <Minimised preview={<ChatWindow />}><WhatsApp className="size-6" /></Minimised>
      </div>
      <button aria-label="Bin" className="-mt-1.5 ml-auto"><Trash /></button>
    </div>
  </footer>
);

export default function App() {
  return (
    <div className="relative flex h-screen flex-col overflow-hidden font-['Inter',sans-serif]">
      <Wallpaper />
      <MenuBar />
      <div className="relative mt-0.5 flex min-h-0 flex-1 flex-col overflow-hidden rounded-[22px] bg-linear-to-b from-white from-96% to-[#f7f7f7]">
        <Toolbar />
        <TabBar />
        <TranslateBar />
        <SiteHeader />
        <UploadForm />
        <Recaptcha />
      </div>
      <Dock />
    </div>
  );
}
